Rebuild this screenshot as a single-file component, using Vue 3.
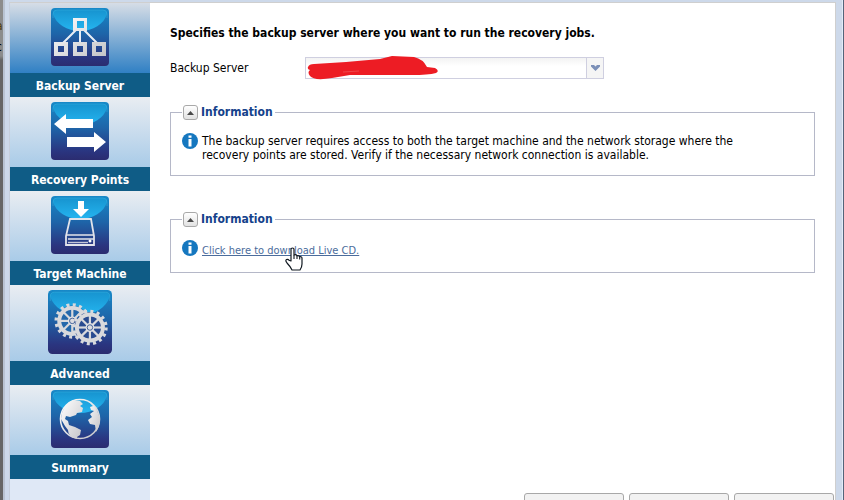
<template>
  <div class="desktop">
    <div class="behind-left">
      <span class="behind-text first">a</span>
      <span class="behind-text">c</span>
    </div>
    <div class="window">
      <div class="panel">
        <nav class="steps">
          <a v-for="step in steps" :key="step.name" class="step" :class="{ active: step.active }" href="#">
            <span class="step-picture">
              <svg :width="step.size" :height="step.size" viewBox="0 0 58 58">
                <defs>
                  <linearGradient id="tile" x1="0" y1="0" x2="0" y2="1">
                    <stop offset="0" stop-color="#1789c8" />
                    <stop offset="0.45" stop-color="#1e64a8" />
                    <stop offset="0.85" stop-color="#2a3580" />
                    <stop offset="1" stop-color="#2b2c70" />
                  </linearGradient>
                  <linearGradient id="gloss" x1="0" y1="0" x2="0" y2="1">
                    <stop offset="0" stop-color="#1794d0" />
                    <stop offset="1" stop-color="#25b5f0" />
                  </linearGradient>
                  <linearGradient id="metal" x1="0" y1="0" x2="1" y2="1">
                    <stop offset="0" stop-color="#ffffff" />
                    <stop offset="1" stop-color="#c4c4c8" />
                  </linearGradient>
                </defs>
                <rect width="58" height="58" rx="4" fill="url(#tile)" />
                <path d="M2 6q0-4 4-4h46q4 0 4 4C53 16 42 23 29 23S5 16 2 6z" fill="url(#gloss)" />
                <path d="M2 10V6q0-4 4-4h46q4 0 4 4v4" fill="none" stroke="#35b5e2" stroke-width="0.7" opacity="0.7" />
                <g v-if="step.icon === 'server'">
                  <path d="M25 22L11 36M29 22v14M33 22l14 14" stroke="#e8eef6" stroke-width="2" />
                  <path
                    fill="url(#metal)"
                    fill-rule="evenodd"
                    d="M22 10h14v13H22zM26 13v7h7v-7zM3 34h14v14H3zM7 38v6h6v-6zM22 34h14v14H22zM26 38v6h6v-6zM41 34h14v14H41zM45 38v6h6v-6z"
                  />
                </g>
                <g v-else-if="step.icon === 'arrows'" fill="#ffffff">
                  <path d="M3 22L15 12v5h27v9H15v6z" />
                  <path d="M55 40L43 30v5H16v10h27v5z" />
                </g>
                <g v-else-if="step.icon === 'drive'">
                  <path d="M27 5h6v8h5l-8 8-8-8h5z" fill="#ffffff" />
                  <path d="M19 23h21l3 17v9H15v-9z" fill="none" stroke="#e2e3ea" stroke-width="1.8" />
                  <path d="M15 39h28M17 43h26" stroke="#e2e3ea" stroke-width="1.6" />
                  <path d="M17 46.500h20" stroke="#c5c7d8" stroke-width="1.400" />
                  <circle cx="39" cy="45" r="1.500" fill="#ffffff" />
                </g>
                <g v-else-if="step.icon === 'gears'">
                  <g v-for="gear in gears" :key="gear.x" :transform="`translate(${gear.x} ${gear.y})`">
                    <circle r="14" :fill="gear.back" />
                    <circle r="11.800" fill="none" stroke="#d9d9dc" stroke-width="3.600" />
                    <circle r="14.600" fill="none" stroke="#d9d9dc" stroke-width="3" stroke-dasharray="2.700 3.034" />
                    <path
                      v-for="n in 4"
                      :key="n"
                      d="M0-11V11"
                      stroke="#d9d9dc"
                      stroke-width="2"
                      :transform="`rotate(${n * 45})`"
                    />
                    <circle r="4" fill="#e4e4e6" />
                    <circle r="2.500" fill="#dcdce0" stroke="#355591" stroke-width="0.800" />
                  </g>
                </g>
                <g v-else>
                  <circle cx="29" cy="29" r="19.500" fill="none" stroke="url(#metal)" stroke-width="1.600" />
                  <path
                    d="M10 29Q11 15 22 10l7 1 3 3-3 2 3 2-1 4-5 1-1 2-6 2-4-1-1 3 3 2 1 4 6 2 6 3-1 5-3 2v2q-9-2-9-9l-3-4z"
                    fill="url(#metal)"
                  />
                  <path
                    d="M36 11q9 4 11 12l2 6q0 7-4 13l-1-7-5-1-2-4 4-3-2-3 4-3-3-1-1-3 3-1-3-3z"
                    fill="url(#metal)"
                  />
                </g>
              </svg>
            </span>
            <span class="step-name">{{ step.name }}</span>
          </a>
        </nav>

        <main class="content">
          <h1>Specifies the backup server where you want to run the recovery jobs.</h1>

          <div class="field">
            <label for="server">Backup Server</label>
            <div class="combo">
              <select id="server"></select>
              <span class="combo-arrow">
                <svg width="9" height="6" viewBox="0 0 9 6">
                  <path d="M0 0h3l1.500 1.500L6 0h3v1.500L4.500 6 0 1.500z" fill="#7c90b8" />
                </svg>
              </span>
              <svg class="scribble" width="134" height="24" viewBox="0 0 134 24">
                <path
                  d="M2 11Q3 8 8 8L40 6 74 3 86 0 108 1Q117 3 121 11L129 12Q134 15 130 17 122 19 106 19L74 19 44 19 26 22Q8 25 4 20 1 16 4 14 1 13 2 11z"
                  fill="#ed1c24"
                />
                <path d="M37 16l16-1" stroke="#f0575c" stroke-width="0.700" />
              </svg>
            </div>
          </div>

          <fieldset class="info">
            <legend>
              <button class="toggle" type="button">
                <svg width="7" height="4" viewBox="0 0 7 4"><path d="M3.500 0L7 4H0z" fill="#4a4a4a" /></svg>
              </button>
              Information
            </legend>
            <div class="info-row">
              <svg class="info-icon" width="16" height="16" viewBox="0 0 16 16">
                <circle cx="8" cy="8" r="8" fill="#1577bf" />
                <path d="M6.500 2.500h3v2.300h-3zM6.500 6h3v7.500h-3z" fill="#ffffff" />
              </svg>
              <p>
                The backup server requires access to both the target machine and the network storage where the<br />
                recovery points are stored. Verify if the necessary network connection is available.
              </p>
            </div>
          </fieldset>

          <fieldset class="info">
            <legend>
              <button class="toggle" type="button">
                <svg width="7" height="4" viewBox="0 0 7 4"><path d="M3.500 0L7 4H0z" fill="#4a4a4a" /></svg>
              </button>
              Information
            </legend>
            <div class="info-row">
              <svg class="info-icon" width="16" height="16" viewBox="0 0 16 16">
                <circle cx="8" cy="8" r="8" fill="#1577bf" />
                <path d="M6.500 2.500h3v2.300h-3zM6.500 6h3v7.500h-3z" fill="#ffffff" />
              </svg>
              <p class="download">
                <a href="#">Click here to download Live CD.</a>
                <svg class="cursor" width="18" height="24" viewBox="0 0 18 24">
                  <path
                    d="M6 14V2.500Q6 1 7.500 1T9 2.500V8q2-1 3 .8 2-.8 2.700.9 2.300-.6 2.300 1.800V17q0 3-2 6H7Q5 19 2 16 0 13.500 1.500 12.600T4 13.200z"
                    fill="#ffffff"
                    stroke="#101820"
                    stroke-width="1.200"
                    stroke-linejoin="round"
                  />
                  <path d="M9 8v4M12 9v3M14.700 10v2.500" stroke="#101820" stroke-width="1.100" />
                </svg>
              </p>
            </div>
          </fieldset>

          <footer class="actions">
            <button v-for="n in 3" :key="n" type="button"></button>
          </footer>
        </main>
      </div>
    </div>
    <div class="behind-right"></div>
  </div>
</template>

<script setup>
const steps = [
  { name: 'Backup Server', icon: 'server', size: 58, active: true },
  { name: 'Recovery Points', icon: 'arrows', size: 58 },
  { name: 'Target Machine', icon: 'drive', size: 58 },
  { name: 'Advanced', icon: 'gears', size: 64 },
  { name: 'Summary', icon: 'globe', size: 58 },
];

const gears = [
  { x: 22, y: 28, back: '#2468ab' },
  { x: 38, y: 34, back: '#294b90' },
];
</script>

<style>
body {
  overflow: hidden;
}
</style>

<style scoped>
.desktop {
  display: flex;
  height: 100vh;
  overflow: hidden;
  font-family: Tahoma, 'DejaVu Sans Condensed', 'Noto Sans', sans-serif;
  font-size: 12px;
  line-height: 14px;
  color: #000;
}

.behind-left {
  flex: none;
  width: 3px;
  overflow: hidden;
  background: linear-gradient(#8c8c8c 0, #8c8c8c 56px, #666 60px);
}

.behind-text {
  display: block;
  margin-left: -4px;
}

.behind-text.first {
  margin-top: 19px;
  margin-bottom: 7px;
  color: #4d3a10;
}

.behind-right {
  flex: none;
  width: 1px;
  background: #53647a;
}

.window {
  flex: 1;
  box-sizing: border-box;
  height: calc(100vh + 20px);
  padding: 2px 6px 0 4px;
  border-left: 2px solid #b9c3d2;
  border-right: 1px solid #e2ecf8;
  background: #cdd9ea;
}

.panel {
  display: flex;
  box-sizing: border-box;
  height: 100%;
  border: 1px solid #cfcfcf;
  border-left-color: #c6cfdc;
  background: #fff;
}

.steps {
  flex: none;
  width: 140px;
  background: #dfe8f6;
}

.step {
  display: block;
  text-decoration: none;
}

.step-picture {
  display: flex;
  justify-content: center;
  padding: 5px 0 7px;
  background: linear-gradient(#e9edf2, #a9cbe8);
}

.active .step-picture {
  background: linear-gradient(#d6dde6, #3080c4);
}

.step-name {
  display: block;
  padding-top: 2px;
  background: #0f5c86;
  color: #fff;
  font-weight: bold;
  line-height: 22px;
  text-align: center;
}

.content {
  display: flex;
  flex: 1;
  flex-direction: column;
  padding: 23px 20px 0;
}

h1 {
  margin: 0;
  font-size: 12px;
  line-height: 14px;
}

.field {
  display: flex;
  align-items: center;
  margin-top: 17px;
  margin-bottom: 26px;
}

.field label {
  width: 135px;
}

.combo {
  position: relative;
  display: flex;
  box-sizing: border-box;
  width: 299px;
  height: 22px;
  border: 1px solid #cfcfe0;
}

.combo select {
  flex: 1;
  appearance: none;
  border: 0;
  background: linear-gradient(#f3f3f3, #fff 8px);
}

.combo-arrow {
  display: flex;
  align-items: center;
  justify-content: center;
  width: 16px;
  border-left: 1px solid #cfcfe0;
  background: #f5f5f5;
  pointer-events: none;
}

.scribble {
  position: absolute;
  top: -2px;
  left: 0;
}

.info {
  margin: 0 0 36px;
  padding: 13px 11px;
  border: 1px solid #b5b8c8;
}

.info legend {
  display: flex;
  align-items: center;
  gap: 3px;
  padding: 0 2px 0 1px;
  color: #15428b;
  font-weight: bold;
  line-height: 15px;
}

.toggle {
  display: flex;
  align-items: center;
  justify-content: center;
  width: 15px;
  height: 15px;
  padding: 0;
  border: 1px solid #a9a9a9;
  border-radius: 3px;
  background: linear-gradient(#fff, #e2e2e2);
}

.info-row {
  display: flex;
  gap: 4px;
}

.info-icon {
  flex: none;
}

.info-row p {
  position: relative;
  margin: 1px 0 0;
}

.info-row .download {
  margin-top: 3px;
  font-size: 11px;
  line-height: 16px;
}

.download a {
  color: #4b6c9c;
}

.cursor {
  position: absolute;
  top: 4px;
  left: 83px;
}

.actions {
  display: flex;
  justify-content: flex-end;
  gap: 5px;
  margin: auto -19px 4px 0;
}

.actions button {
  width: 100px;
  height: 22px;
  border: 1px solid #a8a8a8;
  border-radius: 3px;
  background: #f2f2f2;
}
</style>
